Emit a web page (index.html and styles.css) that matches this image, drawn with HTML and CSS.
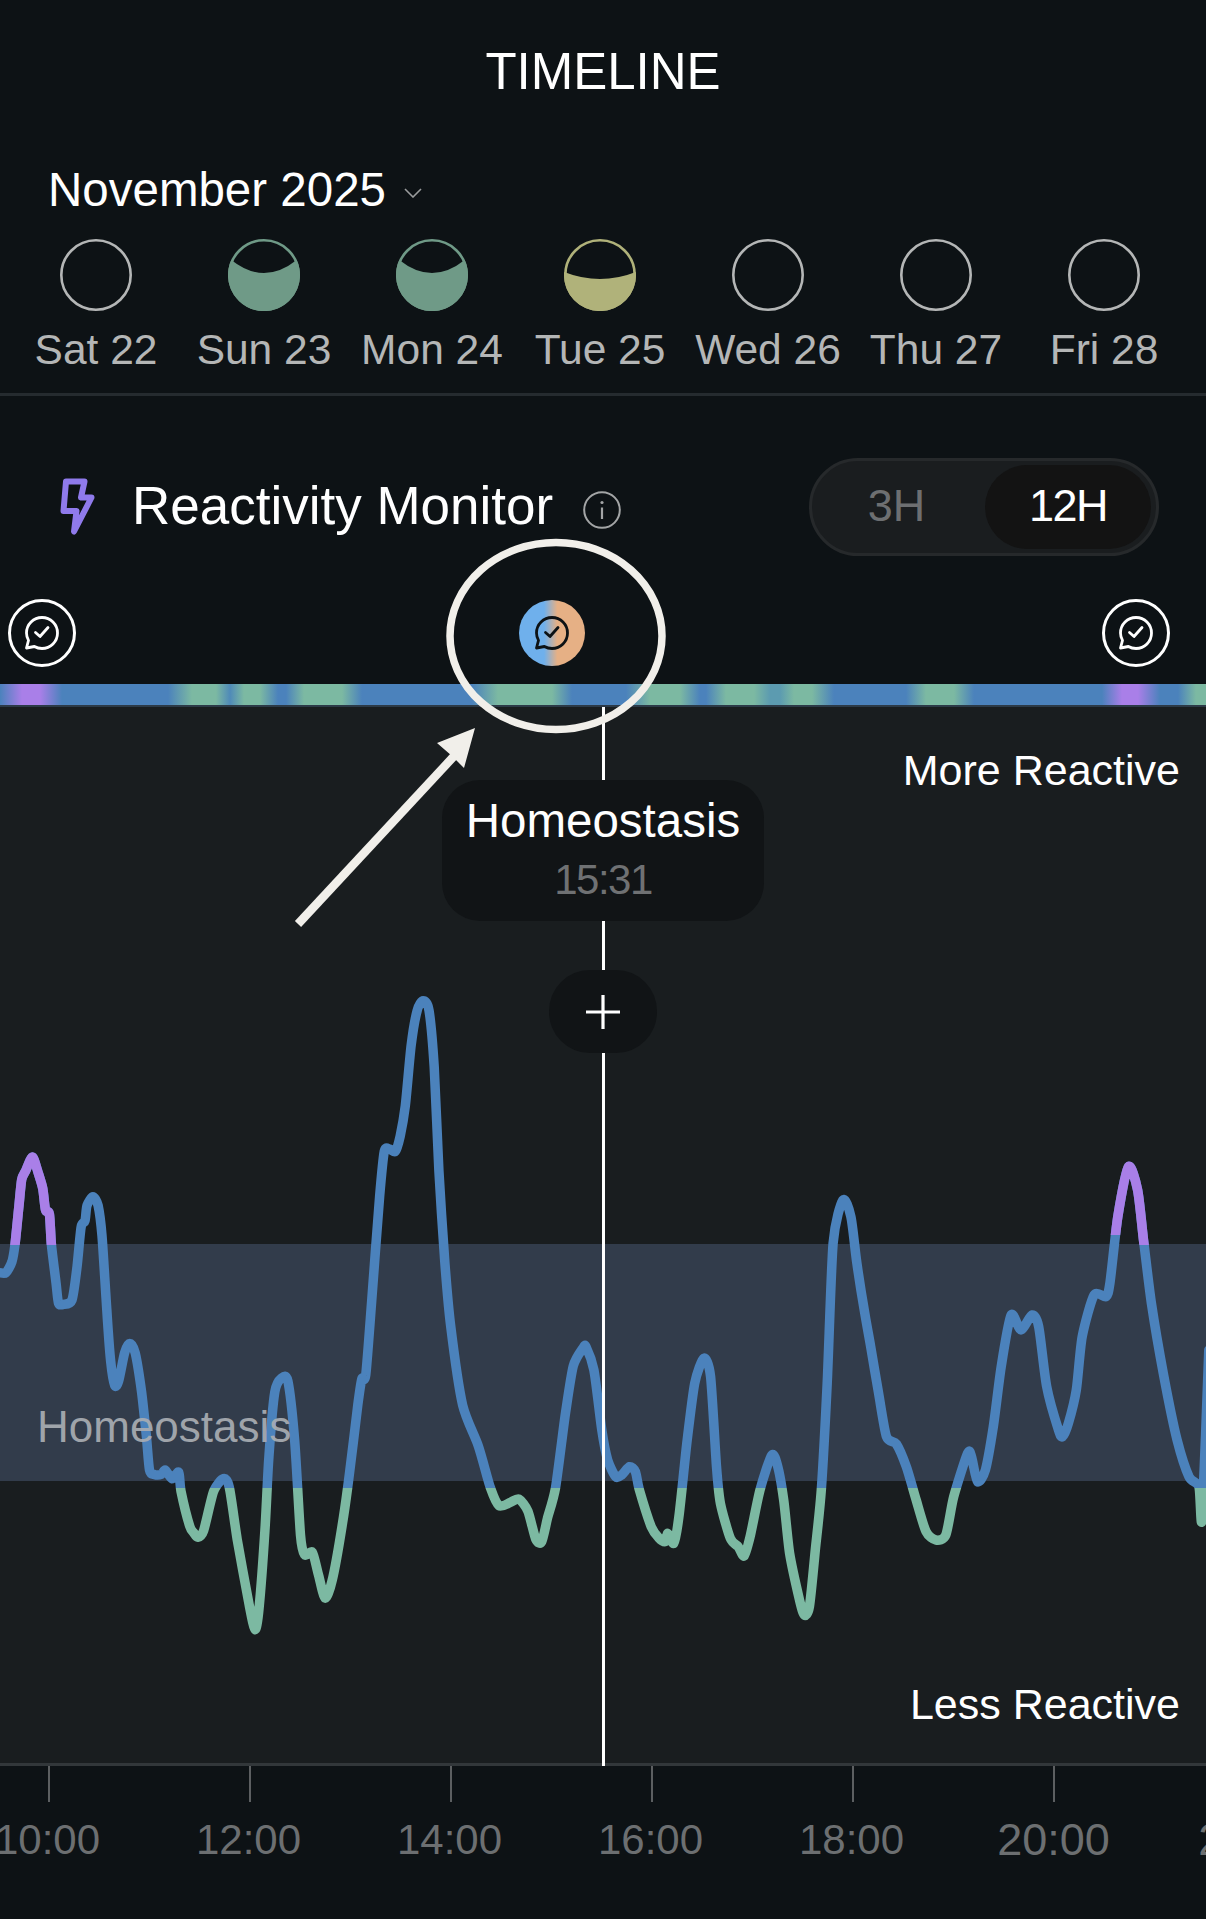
FILE: index.html
```html
<!DOCTYPE html>
<html lang="en">
<head>
<meta charset="utf-8">
<title>Timeline</title>
<link rel="stylesheet" href="styles.css">
</head>
<body>
<svg class="defs" width="0" height="0" aria-hidden="true">
  <symbol id="chat" viewBox="0 0 34 34">
    <path d="M17 1.5C25.6 1.5 32.5 8.4 32.5 17C32.5 25.6 25.6 32.5 17 32.5C14.2 32.5 11.6 31.8 9.4 30.5L1.5 32L3.5 24.4C2.2 22.2 1.5 19.7 1.5 17C1.5 8.4 8.4 1.5 17 1.5Z" fill="none" stroke="currentColor" stroke-width="2.8" stroke-linejoin="round"/>
    <path d="M10.5 16.5L15 20.5L23 11.5" fill="none" stroke="currentColor" stroke-width="2.8" stroke-linecap="round" stroke-linejoin="round"/>
  </symbol>
  <symbol id="ring" viewBox="0 0 72 72">
    <circle cx="36" cy="36" r="34.7" fill="none" stroke="currentColor" stroke-width="2.6"/>
  </symbol>
</svg>

<main class="page">
  <h1 class="title">TIMELINE</h1>

  <div class="month">
    <span>November 2025</span>
    <svg class="chevron" viewBox="0 0 18 10"><path d="M1 1L9 9L17 1" fill="none" stroke="currentColor" stroke-width="1.6"/></svg>
  </div>

  <div class="week">
    <div class="day">
      <svg class="moon moon-empty"><use href="#ring"/></svg>
      <span>Sat 22</span>
    </div>
    <div class="day">
      <svg class="moon moon-green" viewBox="0 0 72 72"><use href="#ring"/><path d="M3.3 21Q36 47 68.7 21A36 36 0 1 1 3.3 21Z" fill="currentColor"/></svg>
      <span>Sun 23</span>
    </div>
    <div class="day">
      <svg class="moon moon-green" viewBox="0 0 72 72"><use href="#ring"/><path d="M3.3 21Q36 47 68.7 21A36 36 0 1 1 3.3 21Z" fill="currentColor"/></svg>
      <span>Mon 24</span>
    </div>
    <div class="day">
      <svg class="moon moon-yellow" viewBox="0 0 72 72"><use href="#ring"/><path d="M0.13 33Q36 47 71.87 33A36 36 0 1 1 0.13 33Z" fill="currentColor"/></svg>
      <span>Tue 25</span>
    </div>
    <div class="day">
      <svg class="moon moon-empty"><use href="#ring"/></svg>
      <span>Wed 26</span>
    </div>
    <div class="day">
      <svg class="moon moon-empty"><use href="#ring"/></svg>
      <span>Thu 27</span>
    </div>
    <div class="day">
      <svg class="moon moon-empty"><use href="#ring"/></svg>
      <span>Fri 28</span>
    </div>
  </div>

  <div class="divider"></div>

  <section class="monitor-head">
    <svg class="bolt" viewBox="0 0 60 72"><path d="M16 11.5H34.5L31 27.5H41.5L24 61.5L26.5 41H13.5Z" fill="none" stroke="currentColor" stroke-width="6" stroke-linejoin="round"/></svg>
    <h2 class="monitor-title">Reactivity Monitor</h2>
    <svg class="info" viewBox="0 0 38 38">
      <circle cx="19" cy="19" r="17.8" fill="none" stroke="currentColor" stroke-width="2"/>
      <circle cx="19" cy="11.5" r="1.6" fill="currentColor"/>
      <path d="M19 16.5V28" stroke="currentColor" stroke-width="2.2"/>
    </svg>
    <div class="toggle">
      <span class="toggle-item toggle-off">3H</span>
      <span class="toggle-item toggle-on">12H</span>
    </div>
  </section>

  <div class="events">
    <span class="event event-first"><svg class="chat"><use href="#chat"/></svg></span>
    <span class="event-active"><svg class="chat"><use href="#chat"/></svg></span>
    <span class="event event-last"><svg class="chat"><use href="#chat"/></svg></span>
  </div>

  <div class="state-bar"></div>

  <section class="chart">
    <div class="band"></div>
    <svg class="plot" viewBox="0 707 1206 1056" width="1206" height="1056">
      <defs>
        <clipPath id="clip-purple"><path d="M0 707H60V1245H0ZM1100 707H1130V1235H1100ZM1130 707H1170V1245H1130Z"/></clipPath>
        <clipPath id="clip-blue"><rect x="0" y="707" width="1206" height="781"/></clipPath>
        <clipPath id="clip-green"><rect x="0" y="1488" width="1206" height="300"/></clipPath>
      </defs>
      <g clip-path="url(#clip-blue)"><path class="trace trace-blue"/></g>
      <g clip-path="url(#clip-purple)"><path class="trace trace-purple"/></g>
      <g clip-path="url(#clip-green)"><path class="trace trace-green"/></g>
    </svg>
    <span class="band-label">Homeostasis</span>
    <span class="chart-note note-more">More Reactive</span>
    <span class="chart-note note-less">Less Reactive</span>
    <div class="cursor"></div>
    <div class="tooltip">
      <span class="tooltip-state">Homeostasis</span>
      <span class="tooltip-time">15:31</span>
    </div>
    <div class="add">
      <svg class="add-icon" viewBox="0 0 34 34"><path d="M17 0V34M0 17H34" stroke="currentColor" stroke-width="3.2"/></svg>
    </div>
  </section>

  <div class="axis">
    <div class="tick"><i></i><span>10:00</span></div>
    <div class="tick"><i></i><span>12:00</span></div>
    <div class="tick"><i></i><span>14:00</span></div>
    <div class="tick"><i></i><span>16:00</span></div>
    <div class="tick"><i></i><span>18:00</span></div>
    <div class="tick"><i></i><span class="tick-wide">20:00</span></div>
    <div class="tick"><i></i><span class="tick-wide">22:00</span></div>
  </div>

  <svg class="annotation" viewBox="0 0 1206 1919" width="1206" height="1919">
    <ellipse cx="556" cy="636" rx="106" ry="93.5" fill="none" stroke="#f1efea" stroke-width="7.5"/>
    <path d="M298 924L456 754" fill="none" stroke="#f1efea" stroke-width="8.5"/>
    <path d="M475 728L437 743L452 756L464 768Z" fill="#f1efea"/>
  </svg>
</main>
<script src="chart.js"></script>
</body>
</html>
```

FILE: styles.css
```css
* { box-sizing: border-box; }

html, body {
  margin: 0;
  padding: 0;
  background: #0d1215;
}

body {
  width: 1206px;
  height: 1919px;
  overflow: hidden;
  font-family: "Liberation Sans", Arial, sans-serif;
  color: #fff;
}

.defs { position: absolute; }

.page {
  position: relative;
  width: 1206px;
  height: 1919px;
  overflow: hidden;
  padding-top: 42px;
}

.title {
  margin: 0;
  height: 60px;
  font-size: 51px;
  font-weight: 400;
  line-height: 60px;
  text-align: center;
}

.month {
  display: flex;
  align-items: center;
  height: 56px;
  margin-top: 60px;
  padding-left: 48px;
  font-size: 47.5px;
  line-height: 56px;
}

.chevron {
  width: 18px;
  height: 10px;
  margin: 6px 0 0 18px;
  color: #9a9c9d;
}

.week {
  display: grid;
  grid-template-columns: repeat(7, 168px);
  margin: 21px 0 0 12px;
}

.day {
  display: flex;
  flex-direction: column;
  align-items: center;
  font-size: 42.5px;
  line-height: 50px;
  color: #b4b6b6;
}

.day span { margin-top: 14px; white-space: nowrap; }

.moon { width: 72px; height: 72px; display: block; }
.moon-empty { color: #b4b6b6; }
.moon-green { color: #6f9a87; }
.moon-yellow { color: #b0b27a; }

.divider {
  height: 3px;
  margin-top: 18px;
  background: #252b2f;
}

.monitor-head {
  display: flex;
  align-items: center;
  height: 98px;
  margin-top: 62px;
  padding: 0 47px 0 50px;
}

.bolt {
  width: 60px;
  height: 72px;
  margin-top: -2px;
  color: #8f7aeb;
}

.monitor-title {
  margin: -2px 0 0 22px;
  font-size: 53px;
  font-weight: 400;
  line-height: 64px;
  white-space: nowrap;
}

.info {
  width: 38px;
  height: 38px;
  margin: 6px 0 0 30px;
  color: #a3a5a6;
}

.toggle {
  display: flex;
  width: 350px;
  height: 98px;
  margin-left: auto;
  padding: 4px;
  border: 3px solid #26292b;
  border-radius: 49px;
  background: #1a1d1f;
  font-size: 45px;
}

.toggle-item {
  display: flex;
  align-items: center;
  justify-content: center;
  height: 84px;
  padding-bottom: 2px;
  border-radius: 42px;
}

.toggle-off {
  width: 169px;
  padding-right: 8px;
  color: #6d6f71;
}

.toggle-on {
  width: 166px;
  background: #131313;
  letter-spacing: -1.5px;
}

.events {
  display: flex;
  align-items: center;
  height: 68px;
  margin-top: 43px;
  padding-left: 8px;
}

.event,
.event-active {
  display: flex;
  align-items: center;
  justify-content: center;
  border-radius: 50%;
}

.event {
  width: 68px;
  height: 68px;
  border: 3px solid #fff;
  color: #fff;
}

.event-active {
  width: 66px;
  height: 66px;
  margin-left: 443px;
  background: linear-gradient(90deg, #6fb0ec 0%, #6fb0ec 38%, #e6b085 58%, #e6b085 100%);
  color: #0d1215;
}

.event-last { margin-left: 517px; }

.chat { width: 34px; height: 34px; display: block; }

.state-bar {
  height: 21px;
  margin-top: 17px;
  background: linear-gradient(90deg,
    #4b82bc 0px, #a97fe8 22px, #a97fe8 40px, #4b82bc 62px,
    #4b82bc 168px, #7cb9a2 192px, #7cb9a2 216px, #4f8ab8 230px, #7cb9a2 244px, #7cb9a2 260px,
    #4b82bc 278px, #4b82bc 286px, #7cb9a2 304px, #7cb9a2 342px,
    #4b82bc 362px, #4b82bc 472px, #7cb9a2 498px, #7cb9a2 552px,
    #4b82bc 572px, #4b82bc 626px, #7cb9a2 650px, #7cb9a2 680px,
    #4b82bc 700px, #4b82bc 706px, #7cb9a2 726px, #7cb9a2 754px,
    #5c9bb0 770px, #5c9bb0 780px, #7cb9a2 794px, #7cb9a2 812px,
    #4b82bc 834px, #4b82bc 906px, #7cb9a2 926px, #7cb9a2 954px,
    #4b82bc 974px, #4b82bc 1102px, #a97fe8 1122px, #a97fe8 1138px,
    #4b82bc 1160px, #4b82bc 1178px, #7cb9a2 1196px, #7cb9a2 1206px);
}

.chart {
  position: relative;
  height: 1061px;
  border-top: 2px solid #2c3a47;
  border-bottom: 3px solid #32373a;
  background: #191d1f;
  font-size: 43px;
  line-height: 50px;
}

.band {
  position: absolute;
  top: 537px;
  left: 0;
  right: 0;
  height: 237px;
  background: #323c4b;
}

.plot {
  position: absolute;
  top: 0;
  left: 0;
}

.trace {
  fill: none;
  stroke-width: 9.5;
  stroke-linejoin: round;
  stroke-linecap: round;
}

.trace-blue { stroke: #4b82bc; }
.trace-purple { stroke: #a97fe8; }
.trace-green { stroke: #7cb9a2; }

.band-label {
  position: absolute;
  top: 695px;
  left: 37px;
  font-size: 44px;
  color: #a9adb3;
  opacity: 0.92;
}

.chart-note {
  position: absolute;
  right: 26px;
}

.note-more { top: 38px; }
.note-less { top: 972px; }

.cursor {
  position: absolute;
  top: 0;
  bottom: -3px;
  left: 601.5px;
  width: 3px;
  background: #fff;
}

.tooltip {
  position: absolute;
  top: 73px;
  left: 442px;
  display: flex;
  flex-direction: column;
  align-items: center;
  width: 322px;
  height: 141px;
  padding-top: 11px;
  border-radius: 38px;
  background: #111416;
}

.tooltip-state {
  font-size: 47.5px;
  line-height: 59px;
}

.tooltip-time {
  font-size: 42px;
  line-height: 59px;
  letter-spacing: -1.5px;
  color: #6f7173;
}

.add {
  position: absolute;
  top: 263px;
  left: 549px;
  display: flex;
  align-items: center;
  justify-content: center;
  width: 108px;
  height: 83px;
  border-radius: 41px;
  background: #111416;
}

.add-icon { width: 34px; height: 34px; color: #fff; }

.axis {
  display: flex;
  margin-left: -52px;
}

.tick {
  flex: 0 0 201px;
  display: flex;
  flex-direction: column;
  align-items: center;
  font-size: 42px;
  line-height: 50px;
  color: #6c6f71;
}

.tick i {
  display: block;
  width: 2px;
  height: 36px;
  background: #5c5f61;
}

.tick span { margin: 13px 2px 0 0; }

.tick .tick-wide {
  margin-right: 0;
  font-size: 45px;
}

.annotation {
  position: absolute;
  top: 0;
  left: 0;
  pointer-events: none;
}
```

FILE: chart.js
```js
// Reactivity trace. Samples are stored in two scales and mapped to page pixels.
var left = [[0,675],[15,675],[30,650],[38,610],[48,520],[55,460],[65,440],[82,408],[95,440],[108,480],[115,530],[125,540],[130,610],[142,700],[148,745],[160,748],[182,738],[195,660],[205,570],[215,555],[220,520],[235,500],[248,520],[258,590],[270,760],[280,880],[290,935],[300,925],[315,860],[328,838],[342,860],[358,950],[370,1050],[378,1130],[390,1140],[408,1140],[418,1130],[435,1150],[452,1135],[458,1180],[480,1260],[490,1275],[500,1285],[515,1270],[540,1180],[565,1150],[580,1170],[600,1290],[630,1440],[645,1498],[655,1450],[670,1270],[680,1100],[695,950],[712,918],[728,925],[745,1060],[760,1280],[770,1325],[790,1320],[805,1370],[822,1425],[840,1385],[865,1260],[885,1130],[905,980],[915,920],[925,910],[940,740],[960,500],[972,395],[985,390],[1000,395],[1012,360],[1025,290],[1040,150],[1055,70],[1070,48],[1085,70],[1098,200],[1110,440],[1125,650],[1140,800],[1170,980],[1210,1075],[1240,1170],[1262,1212],[1290,1205],[1312,1197],[1335,1225],[1355,1290],[1370,1295],[1385,1240],[1405,1170],[1430,1000],[1450,890],[1475,848]];
var right = [[0,590],[20,660],[40,840],[55,930],[75,980],[90,975],[110,950],[125,965],[135,1020],[165,1130],[185,1165],[200,1175],[207,1150],[222,1180],[235,1100],[255,880],[275,700],[298,625],[315,680],[330,950],[340,1060],[365,1165],[385,1190],[400,1218],[415,1160],[440,1020],[470,915],[485,950],[500,1050],[515,1210],[540,1350],[552,1395],[565,1370],[580,1200],[595,1020],[610,700],[625,280],[650,150],[670,200],[685,340],[705,490],[720,590],[740,730],[760,860],[785,882],[810,950],[835,1050],[860,1145],[885,1170],[910,1155],[930,1040],[965,910],[975,920],[990,995],[1010,960],[1030,830],[1050,650],[1075,495],[1100,540],[1128,495],[1145,530],[1165,710],[1195,840],[1205,860],[1220,820],[1240,720],[1255,560],[1285,435],[1315,440],[1325,400],[1345,200],[1372,50],[1395,120],[1410,270],[1430,460],[1460,670],[1495,870],[1525,980],[1550,1010],[1558,1105],[1575,600]];

var points = left.map(function (p) {
  return [p[0] / 2.529, 980 + p[1] / 2.306];
}).concat(right.map(function (p) {
  return [586 + p[0] / 2.529, 1150 + p[1] / 3];
}));

function smooth(pts) {
  var d = 'M' + pts[0][0].toFixed(1) + ' ' + pts[0][1].toFixed(1);
  for (var i = 0; i < pts.length - 1; i++) {
    var p0 = pts[Math.max(i - 1, 0)], p1 = pts[i], p2 = pts[i + 1], p3 = pts[Math.min(i + 2, pts.length - 1)];
    var k = 1 / 8;
    d += 'C' + (p1[0] + (p2[0] - p0[0]) * k).toFixed(1) + ' ' + (p1[1] + (p2[1] - p0[1]) * k).toFixed(1) +
         ' ' + (p2[0] - (p3[0] - p1[0]) * k).toFixed(1) + ' ' + (p2[1] - (p3[1] - p1[1]) * k).toFixed(1) +
         ' ' + p2[0].toFixed(1) + ' ' + p2[1].toFixed(1);
  }
  return d;
}

var d = smooth(points);
document.querySelectorAll('.trace').forEach(function (el) { el.setAttribute('d', d); });
```
